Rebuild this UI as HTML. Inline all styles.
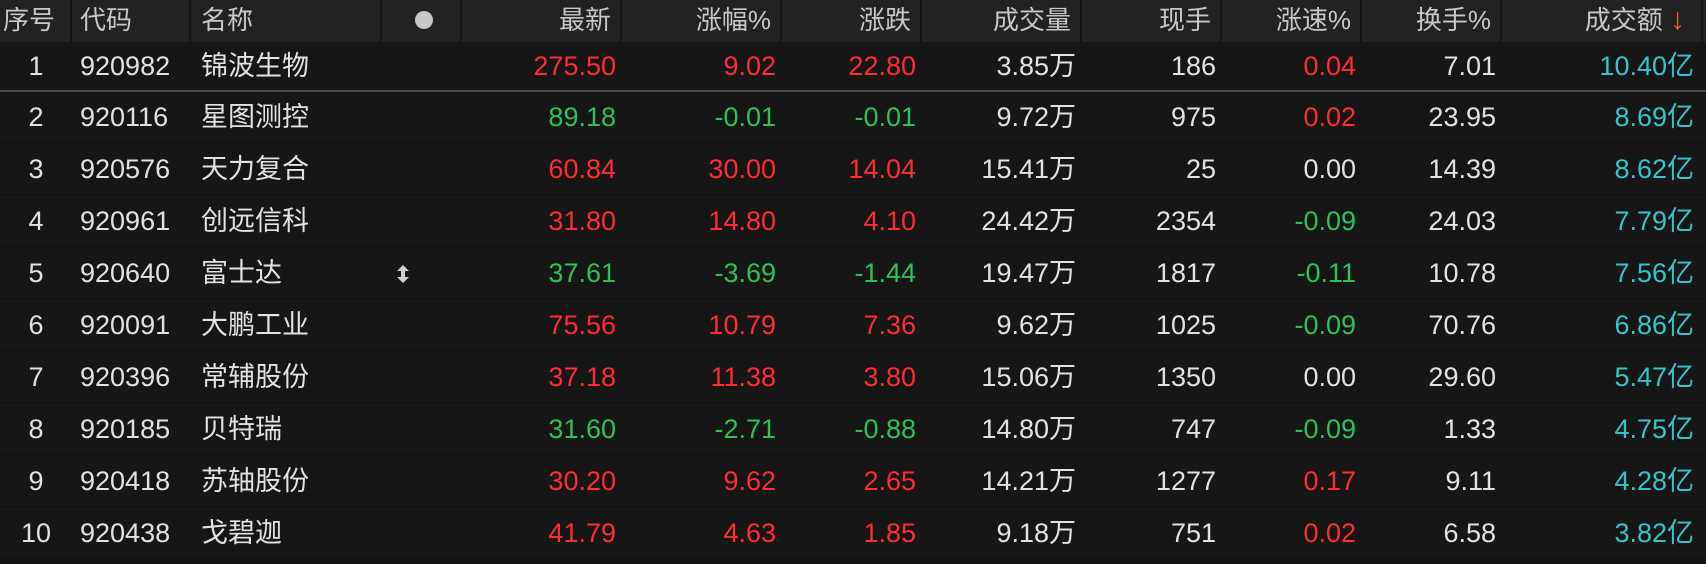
<!DOCTYPE html>
<html><head><meta charset="utf-8"><style>
*{margin:0;padding:0;box-sizing:border-box}
body{width:1706px;height:564px;background:#121212;overflow:hidden;font-family:"Liberation Sans","Noto Sans CJK SC",sans-serif;font-size:27px}
.row{position:absolute;left:0;width:1706px;display:flex}
.hd{top:0;height:42px;background:#222;color:#c8c8c8;font-size:26px}
.hd>div{border-right:2px solid #141414;line-height:40px}
.r{height:50px;background:#161616;color:#e2e2e2;line-height:50px}
.row>div{padding-right:6px;text-align:right;white-space:nowrap;position:relative}
.c0{width:72px;text-align:center!important;padding:0!important}
.c1{width:119px;text-align:left!important;padding-left:8px}
.c2{width:191px;text-align:left!important;padding-left:10px}
.c3{width:80px}
.c4,.c5{width:160px}.c6{width:140px}.c7{width:160px}.c8,.c9,.c10{width:140px}.c11{width:201px}
.hd .c0{text-align:left!important;padding-left:3px!important}
.hd>div{padding-right:9px}
.R{color:#ff2b35}.G{color:#2cc159}.C{color:#35c4c8}
</style></head><body>
<div class="row hd"><div class="c0">序号</div><div class="c1">代码</div><div class="c2">名称</div><div class="c3"><span style="position:absolute;left:33px;top:11px;width:18px;height:18px;border-radius:50%;background:#c8c8c8"></span></div><div class="c4">最新</div><div class="c5">涨幅%</div><div class="c6">涨跌</div><div class="c7">成交量</div><div class="c8">现手</div><div class="c9">涨速%</div><div class="c10">换手%</div><div class="c11" style="padding-right:16px">成交额 <span style="color:#ff5a2a;font-size:30px">↓</span></div></div>

<div class="row r" style="top:42px;height:48px;line-height:48px"><div class="c0">1</div><div class="c1">920982</div><div class="c2">锦波生物</div><div class="c3"></div><div class="c4 R">275.50</div><div class="c5 R">9.02</div><div class="c6 R">22.80</div><div class="c7">3.85万</div><div class="c8">186</div><div class="c9 R">0.04</div><div class="c10">7.01</div><div class="c11 C" style="padding-right:9px">10.40亿</div></div>
<div style="position:absolute;top:90px;left:0;width:1706px;height:2px;background:#4a4a4a"></div>

<div class="row r" style="top:92px"><div class="c0">2</div><div class="c1">920116</div><div class="c2">星图测控</div><div class="c3"></div><div class="c4 G">89.18</div><div class="c5 G">-0.01</div><div class="c6 G">-0.01</div><div class="c7">9.72万</div><div class="c8">975</div><div class="c9 R">0.02</div><div class="c10">23.95</div><div class="c11 C" style="padding-right:9px">8.69亿</div></div>
<div class="row r" style="top:144px"><div class="c0">3</div><div class="c1">920576</div><div class="c2">天力复合</div><div class="c3"></div><div class="c4 R">60.84</div><div class="c5 R">30.00</div><div class="c6 R">14.04</div><div class="c7">15.41万</div><div class="c8">25</div><div class="c9">0.00</div><div class="c10">14.39</div><div class="c11 C" style="padding-right:9px">8.62亿</div></div>
<div class="row r" style="top:196px"><div class="c0">4</div><div class="c1">920961</div><div class="c2">创远信科</div><div class="c3"></div><div class="c4 R">31.80</div><div class="c5 R">14.80</div><div class="c6 R">4.10</div><div class="c7">24.42万</div><div class="c8">2354</div><div class="c9 G">-0.09</div><div class="c10">24.03</div><div class="c11 C" style="padding-right:9px">7.79亿</div></div>
<div class="row r" style="top:248px"><div class="c0">5</div><div class="c1">920640</div><div class="c2">富士达</div><div class="c3"><svg style="position:absolute;left:14px;top:17px" width="14" height="18" viewBox="0 0 14 18"><path d="M7 0L13 6H9V12H13L7 18L1 12H5V6H1Z" fill="#d0d0d0"/></svg></div><div class="c4 G">37.61</div><div class="c5 G">-3.69</div><div class="c6 G">-1.44</div><div class="c7">19.47万</div><div class="c8">1817</div><div class="c9 G">-0.11</div><div class="c10">10.78</div><div class="c11 C" style="padding-right:9px">7.56亿</div></div>
<div class="row r" style="top:300px"><div class="c0">6</div><div class="c1">920091</div><div class="c2">大鹏工业</div><div class="c3"></div><div class="c4 R">75.56</div><div class="c5 R">10.79</div><div class="c6 R">7.36</div><div class="c7">9.62万</div><div class="c8">1025</div><div class="c9 G">-0.09</div><div class="c10">70.76</div><div class="c11 C" style="padding-right:9px">6.86亿</div></div>
<div class="row r" style="top:352px"><div class="c0">7</div><div class="c1">920396</div><div class="c2">常辅股份</div><div class="c3"></div><div class="c4 R">37.18</div><div class="c5 R">11.38</div><div class="c6 R">3.80</div><div class="c7">15.06万</div><div class="c8">1350</div><div class="c9">0.00</div><div class="c10">29.60</div><div class="c11 C" style="padding-right:9px">5.47亿</div></div>
<div class="row r" style="top:404px"><div class="c0">8</div><div class="c1">920185</div><div class="c2">贝特瑞</div><div class="c3"></div><div class="c4 G">31.60</div><div class="c5 G">-2.71</div><div class="c6 G">-0.88</div><div class="c7">14.80万</div><div class="c8">747</div><div class="c9 G">-0.09</div><div class="c10">1.33</div><div class="c11 C" style="padding-right:9px">4.75亿</div></div>
<div class="row r" style="top:456px"><div class="c0">9</div><div class="c1">920418</div><div class="c2">苏轴股份</div><div class="c3"></div><div class="c4 R">30.20</div><div class="c5 R">9.62</div><div class="c6 R">2.65</div><div class="c7">14.21万</div><div class="c8">1277</div><div class="c9 R">0.17</div><div class="c10">9.11</div><div class="c11 C" style="padding-right:9px">4.28亿</div></div>
<div class="row r" style="top:508px"><div class="c0">10</div><div class="c1">920438</div><div class="c2">戈碧迦</div><div class="c3"></div><div class="c4 R">41.79</div><div class="c5 R">4.63</div><div class="c6 R">1.85</div><div class="c7">9.18万</div><div class="c8">751</div><div class="c9 R">0.02</div><div class="c10">6.58</div><div class="c11 C" style="padding-right:9px">3.82亿</div></div>
</body></html>
